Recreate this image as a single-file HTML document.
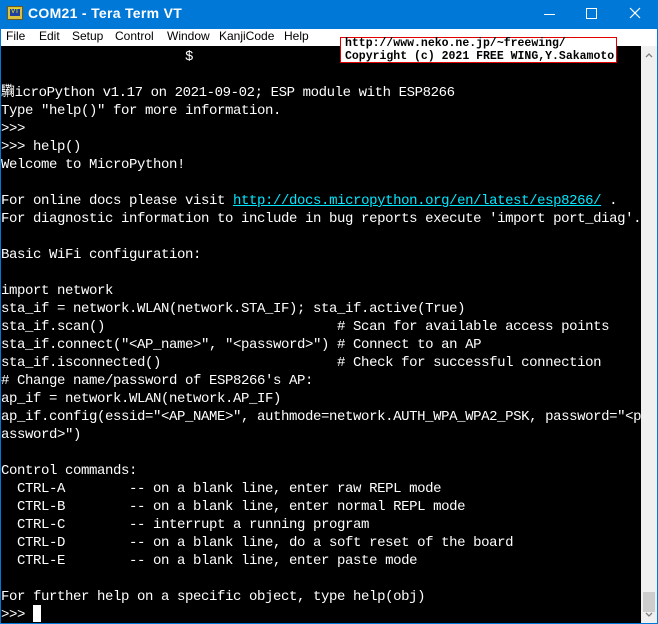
<!DOCTYPE html>
<html><head><meta charset="utf-8"><style>
body{margin:0;width:658px;height:624px;overflow:hidden;background:#0078d7;position:relative;font-family:"Liberation Sans","Noto Sans CJK JP",sans-serif}
#title{position:absolute;left:0;top:0;width:658px;height:29px;background:#0078d7;color:#fff}
#title .t{position:absolute;left:28px;top:5px;font-size:14px;font-weight:bold;letter-spacing:0.3px}
#icon{position:absolute;left:7px;top:6px;width:14px;height:12px;background:#d8c040;border:1px solid #6a5a20}
#icon span{position:absolute;left:2px;top:2px;width:10px;height:7px;background:#2040a0;color:#ff0;font-size:6px;line-height:7px;text-align:center}
#menu{position:absolute;left:1px;top:29px;width:656px;height:17px;background:#fff;font-size:12px;color:#000}
#menu span{position:absolute;top:0px}
#term{position:absolute;left:1px;top:46px;width:640px;height:577px;background:#000}
pre{position:absolute;left:1px;top:48px;margin:0;font-family:"Liberation Mono","Noto Sans CJK JP",monospace;font-size:14px;letter-spacing:-0.4px;line-height:18px;color:#fff}
a{color:#00e8ff;text-decoration:underline}
#sb{position:absolute;left:641px;top:46px;width:16px;height:577px;background:#f0f0f0}
#thumb{position:absolute;left:643px;top:592px;width:12px;height:20px;background:#cdcdcd}
#ov{position:absolute;left:340px;top:37px;width:277px;height:26px;background:#fff;border:1px solid #e00000;font-family:"Liberation Mono",monospace;font-weight:bold;font-size:11.5px;line-height:12.5px;color:#000;padding:0 0 0 4px;box-sizing:border-box}
#cur{position:absolute;left:33px;top:605px;width:8px;height:17px;background:#fff}
</style></head><body>
<div id="title"><div id="icon"><span>VT</span></div><div class="t">COM21 - Tera Term VT</div>
<div style="position:absolute;left:544px;top:14px;width:11px;height:1px;background:#fff"></div>
<div style="position:absolute;left:586px;top:8px;width:9px;height:9px;border:1px solid #fff"></div>
<svg style="position:absolute;left:629px;top:7px" width="12" height="12"><path d="M1 1L11 11M11 1L1 11" stroke="#fff" stroke-width="1.2"/></svg></div>
<div id="menu"><span style="left:5px">File</span><span style="left:38px">Edit</span><span style="left:71px">Setup</span><span style="left:114px">Control</span><span style="left:166px">Window</span><span style="left:218px">KanjiCode</span><span style="left:283px">Help</span></div>
<div id="term"></div>
<div id="sb"><svg style="position:absolute;left:4px;top:6px" width="8" height="6"><path d="M1 5L4 2L7 5" stroke="#808080" fill="none" stroke-width="1.3"/></svg><svg style="position:absolute;left:4px;top:566px" width="8" height="6"><path d="M1 1L4 4L7 1" stroke="#808080" fill="none" stroke-width="1.3"/></svg></div>
<div id="thumb"></div>
<pre>                       $

驧icroPython v1.17 on 2021-09-02; ESP module with ESP8266
Type "help()" for more information.
&gt;&gt;&gt;
&gt;&gt;&gt; help()
Welcome to MicroPython!

For online docs please visit <a>http://docs.micropython.org/en/latest/esp8266/</a> .
For diagnostic information to include in bug reports execute 'import port_diag'.

Basic WiFi configuration:

import network
sta_if = network.WLAN(network.STA_IF); sta_if.active(True)
sta_if.scan()                             # Scan for available access points
sta_if.connect("&lt;AP_name&gt;", "&lt;password&gt;") # Connect to an AP
sta_if.isconnected()                      # Check for successful connection
# Change name/password of ESP8266's AP:
ap_if = network.WLAN(network.AP_IF)
ap_if.config(essid="&lt;AP_NAME&gt;", authmode=network.AUTH_WPA_WPA2_PSK, password="&lt;p
assword&gt;")

Control commands:
  CTRL-A        -- on a blank line, enter raw REPL mode
  CTRL-B        -- on a blank line, enter normal REPL mode
  CTRL-C        -- interrupt a running program
  CTRL-D        -- on a blank line, do a soft reset of the board
  CTRL-E        -- on a blank line, enter paste mode

For further help on a specific object, type help(obj)
&gt;&gt;&gt;</pre>
<div id="cur"></div>
<div id="ov">http://www.neko.ne.jp/~freewing/<br>Copyright (c) 2021 FREE WING,Y.Sakamoto</div>
</body></html>
